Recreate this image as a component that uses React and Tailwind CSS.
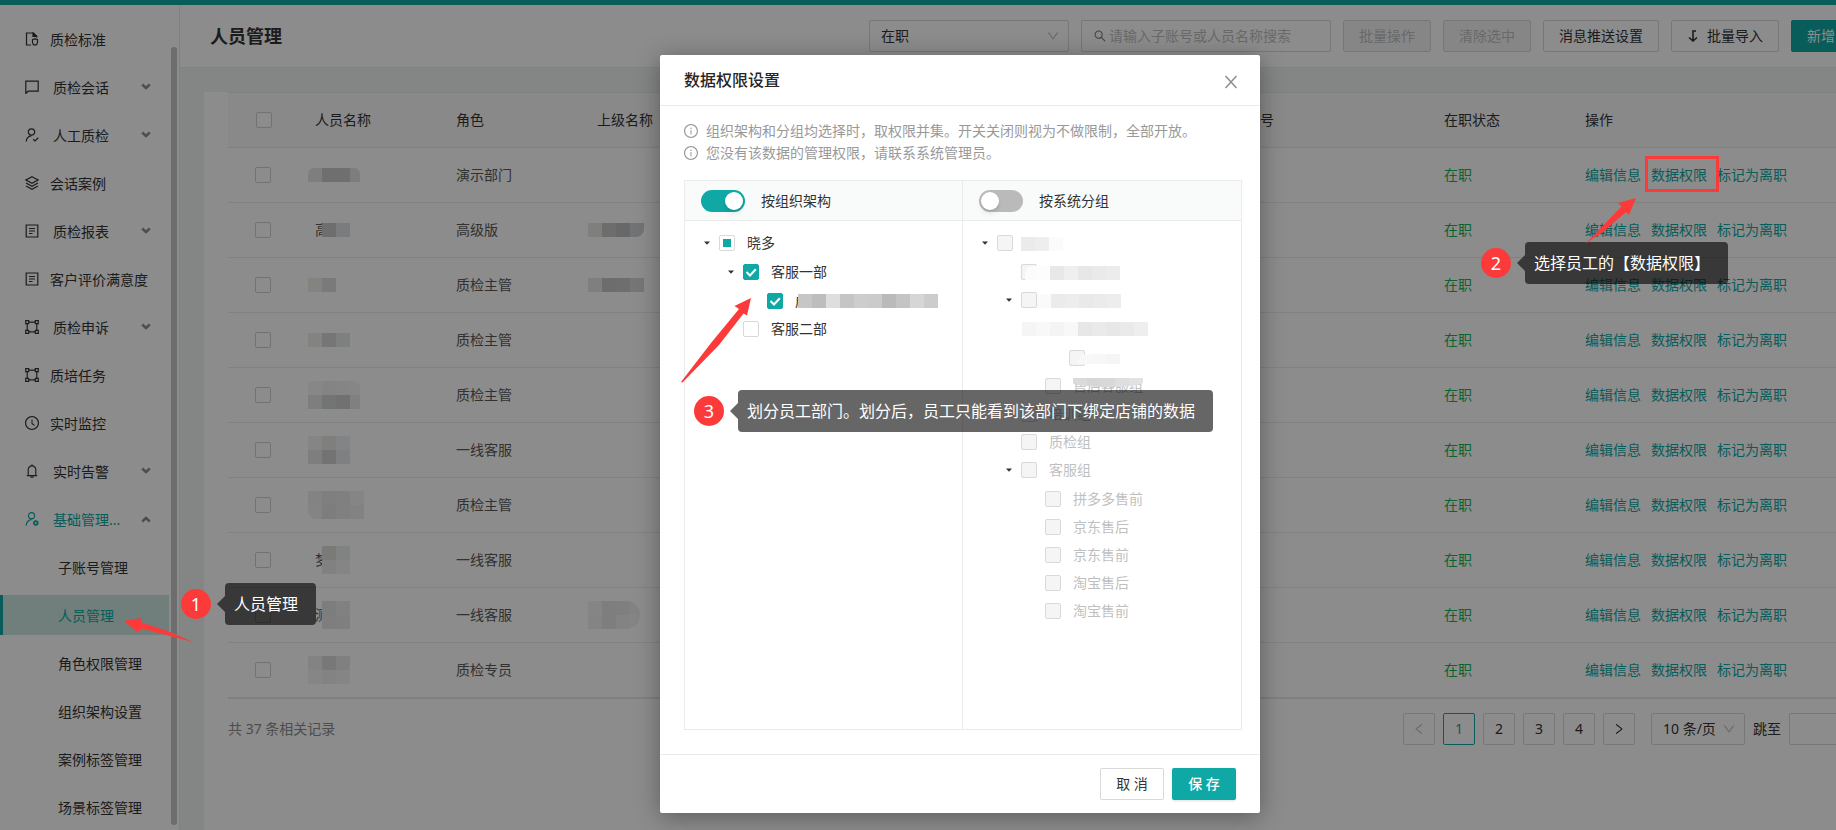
import React from 'react';
import {
  AiOutlineBell,
  AiOutlineClockCircle,
  AiOutlineDown,
  AiOutlineInfoCircle,
  AiOutlineLeft,
  AiOutlineRight,
  AiOutlineSearch
} from 'react-icons/ai';

// Sidebar icons, all on a 14px grid
const Icon = ({ children }) => (
  <svg className="h-3.5 w-3.5 shrink-0" viewBox="0 0 14 14" fill="none" stroke="currentColor" strokeWidth="1.2">
    {children}
  </svg>
);

const StandardIcon = () => (
  <Icon>
    <path d="M6 13H1.5V1H8.5L11.5 4V5.5" />
    <path d="M8 1V4.5H11.5Z" fill="currentColor" />
    <path d="M7.5 7.5L10 6.8L12.5 7.5V10.5C12.5 12 11.3 12.8 10 13.2C8.7 12.8 7.5 12 7.5 10.5Z" />
  </Icon>
);

const ChatIcon = () => (
  <Icon>
    <path d="M0.8 13.5V1.2H13.2V11.2H3.2Z" />
  </Icon>
);

const UserCheckIcon = () => (
  <Icon>
    <circle cx="6.5" cy="4" r="3.2" />
    <path d="M1.2 13.5C1.4 10.5 3.2 8.3 6.5 7.6M8.2 11.3L10 13L13.3 9.8" />
  </Icon>
);

const LayersIcon = () => (
  <Icon>
    <path d="M7 0.8L13 4L7 7.2L1 4Z" />
    <path d="M1 7L7 10.2L13 7M1 10L7 13.2L13 10" />
  </Icon>
);

const ReportIcon = () => (
  <Icon>
    <path d="M1.2 1H12.8V13H1.2Z" />
    <path d="M4 4.5H10M4 7H10M4 9.5H7.5" />
  </Icon>
);

const FrameIcon = () => (
  <Icon>
    <path d="M3.8 2.2H10.2M3.8 11.8H10.2M2.2 3.8V10.2M11.8 3.8V10.2" />
    <path d="M0.7 0.7H3.7V3.7H0.7ZM10.3 0.7H13.3V3.7H10.3ZM0.7 10.3H3.7V13.3H0.7ZM10.3 10.3H13.3V13.3H10.3Z" />
  </Icon>
);

const UserSettingIcon = () => (
  <Icon>
    <circle cx="6.5" cy="3.8" r="3.1" />
    <path d="M1.2 13.5C1.4 10.5 3 8.2 6.5 7.4" />
    <circle cx="10.8" cy="11" r="1.8" strokeWidth="1.8" />
  </Icon>
);

const menu = [
  { label: '质检标准', icon: <StandardIcon /> },
  { label: '质检会话', icon: <ChatIcon />, arrow: 'down' },
  { label: '人工质检', icon: <UserCheckIcon />, arrow: 'down' },
  { label: '会话案例', icon: <LayersIcon /> },
  { label: '质检报表', icon: <ReportIcon />, arrow: 'down' },
  { label: '客户评价满意度', icon: <ReportIcon /> },
  { label: '质检申诉', icon: <FrameIcon />, arrow: 'down' },
  { label: '质培任务', icon: <FrameIcon /> },
  { label: '实时监控', icon: <AiOutlineClockCircle className="-mx-px h-4 w-4" /> },
  { label: '实时告警', icon: <AiOutlineBell className="-mx-px h-4 w-4" />, arrow: 'down' },
  { label: '基础管理...', icon: <UserSettingIcon />, arrow: 'up', open: true }
];

const subMenu = ['子账号管理', '人员管理', '角色权限管理', '组织架构设置', '案例标签管理', '场景标签管理'];

const Sidebar = () => (
  <nav className="relative w-[180px] shrink-0 overflow-hidden border-r border-[#ececec] bg-white pt-[14px]">
    <ul className="mr-[10px] flex flex-col gap-2">
      {menu.map((item) => (
        <li key={item.label}>
          <a
            href="#"
            className={`flex h-10 items-center pl-[25px] ${item.arrow ? 'gap-[14px]' : 'gap-[11px]'} ${item.open ? 'text-[#10a8a4]' : 'text-[#333]'}`}
          >
            {item.icon}
            <span className="grow pt-0.5 whitespace-nowrap">{item.label}</span>
            {item.arrow && (
              <svg
                className={`mr-[18px] h-2.5 w-2.5 text-[#8c8c8c] ${item.arrow === 'up' ? 'rotate-180' : ''}`}
                viewBox="0 0 10 10"
                fill="none"
                stroke="currentColor"
                strokeWidth="2.4"
              >
                <path d="M1.2 2.5L5 6L8.8 2.5" />
              </svg>
            )}
          </a>
        </li>
      ))}
      {subMenu.map((label) => (
        <li key={label}>
          <a
            href="#"
            className={`flex h-10 items-center border-l-[3px] pt-0.5 pl-[55px] ${label === '人员管理' ? 'border-[#10a8a4] bg-[#cde7e2] text-[#10a8a4]' : 'border-transparent text-[#333]'}`}
          >
            {label}
          </a>
        </li>
      ))}
    </ul>
    <div className="absolute top-[42px] right-0.5 bottom-[5px] w-1.5 rounded-full bg-[#c6c6c6]"></div>
  </nav>
);

const Header = () => (
  <header className="flex h-[63px] items-center border-b border-[#ececec] bg-white pr-[41px] pl-[30px]">
    <h1 className="text-lg font-bold text-[#333]">人员管理</h1>
    <div className="ml-auto flex gap-3">
      <div className="relative">
        <select aria-label="在职状态" className="h-8 w-[200px] appearance-none rounded-xs border border-[#d9d9d9] bg-white px-[11px] text-[#333]">
          <option>在职</option>
        </select>
        <AiOutlineDown className="pointer-events-none absolute top-[9px] right-[9px] h-3.5 w-3.5 text-[#bfbfbf]" />
      </div>
      <label className="flex h-8 w-[250px] items-center gap-0.5 rounded-xs border border-[#d9d9d9] px-[11px]">
        <AiOutlineSearch className="h-3.5 w-3.5 text-[#777]" />
        <input
          type="text"
          aria-label="搜索"
          placeholder="请输入子账号或人员名称搜索"
          className="min-w-0 grow outline-none placeholder:text-[#bfbfbf]"
        />
      </label>
      <button disabled className="h-8 rounded-xs border border-[#d9d9d9] bg-[#f5f5f5] px-[15px] text-[#bfbfbf]">批量操作</button>
      <button disabled className="h-8 rounded-xs border border-[#d9d9d9] bg-[#f5f5f5] px-[15px] text-[#bfbfbf]">清除选中</button>
      <button className="h-8 rounded-xs border border-[#d9d9d9] px-[15px] text-[#333]">消息推送设置</button>
      <button className="flex h-8 items-center gap-2 rounded-xs border border-[#d9d9d9] px-[15px] text-[#333]">
        <svg className="h-3 w-3" viewBox="0 0 12 12" fill="none" stroke="currentColor" strokeWidth="1.6">
          <path d="M9 1H6V11M2 7.5L6 11L10 7.5" />
        </svg>
        批量导入
      </button>
      <button className="h-8 rounded-xs bg-[#10a8a4] px-4 text-white">新增人员</button>
    </div>
  </header>
);

// Masked text: rows of 14px blocks
const Mosaic = ({ rows, className = '' }) => (
  <div className={className}>
    {rows.map((cells, i) => (
      <div key={i} className="flex">
        {cells.map((color, j) => (
          <span key={j} className={`h-3.5 w-3.5 shrink-0 ${color}`}></span>
        ))}
      </div>
    ))}
  </div>
);

const people = [
  {
    role: '演示部门',
    mask: [['bg-[#e6e5e2]', 'bg-[#cacaca]', 'bg-[#cacaca]', 'bg-[#e2e4e8]']],
    shape: 'w-[52px] overflow-hidden rounded-t-md'
  },
  {
    first: '高',
    role: '高级版',
    mask: [['bg-[#c8c8c8]', 'bg-[#e0e2e6]']],
    leader: [['bg-[#e8e7e4]', 'bg-[#c6c6c6]', 'bg-[#bebebe]', 'bg-[#d0d2d6]']],
    leaderShape: 'w-14 overflow-hidden rounded-br-lg'
  },
  {
    role: '质检主管',
    mask: [['bg-[#eeeeea]', 'bg-[#dedede]']],
    leader: [['bg-[#e8e7e4]', 'bg-[#c6c6c6]', 'bg-[#c8c8c8]', 'bg-[#d8d8d8]']]
  },
  { role: '质检主管', mask: [['bg-[#efeeeb]', 'bg-[#d8d8d8]', 'bg-[#e6e8e7]']] },
  {
    role: '质检主管',
    mask: [
      ['bg-[#f6f6f6]', 'bg-[#f0f0f0]', 'bg-[#f2f2f2]', 'bg-[#f4f4f4]'],
      ['bg-[#e6e5e2]', 'bg-[#d2d5d4]', 'bg-[#cecece]', 'bg-[#eaeaea]']
    ],
    shape: 'w-[52px] overflow-hidden rounded-tr-md'
  },
  {
    role: '一线客服',
    mask: [
      ['bg-[#f2f2f2]', 'bg-[#e8e8e6]', 'bg-[#eef0f3]'],
      ['bg-[#e6e6e6]', 'bg-[#d2d2d2]', 'bg-[#e8eaed]']
    ]
  },
  {
    role: '质检主管',
    mask: [
      ['bg-[#eeeeee]', 'bg-[#e8e8e8]', 'bg-[#eaeaea]', 'bg-[#f0f2f1]'],
      ['bg-[#f0f0f0]', 'bg-[#e2e5e4]', 'bg-[#eaeaea]', 'bg-[#ecefee]']
    ],
    shape: 'overflow-hidden rounded-bl-lg'
  },
  {
    first: '梦',
    role: '一线客服',
    mask: [
      ['bg-[#deded9]', 'bg-[#ecefee]'],
      ['bg-[#ececec]', 'bg-[#f2f2f2]']
    ]
  },
  {
    first: '测',
    role: '一线客服',
    mask: [
      ['bg-[#e2e5e4]', 'bg-[#ececec]'],
      ['bg-[#e6e6e6]', 'bg-[#e8e8e8]']
    ],
    leader: [
      ['bg-[#f2f2f2]', 'bg-[#e6e6e6]', 'bg-[#e8e8e8]', 'bg-[#eeeeee]'],
      ['bg-[#f0f0f0]', 'bg-[#e4e7e6]', 'bg-[#eeeeee]', 'bg-[#f2f2f2]']
    ],
    leaderShape: 'w-[52px] overflow-hidden rounded-r-2xl'
  },
  {
    role: '质检专员',
    mask: [
      ['bg-[#eeeeee]', 'bg-[#dadada]', 'bg-[#eaeaea]'],
      ['bg-[#f4f4f4]', 'bg-[#eeeeee]', 'bg-[#f2f2f2]']
    ]
  }
];

const RowCheck = ({ label }) => (
  <input
    type="checkbox"
    aria-label={label}
    className="block h-4 w-4 appearance-none rounded-xs border border-[#d0d0d0] bg-white"
  />
);

const PeopleTable = () => (
  <table className="w-full table-fixed border-t border-[#ececec] text-left">
    <colgroup>
      <col className="w-[71px]" />
      <col className="w-[141px]" />
      <col className="w-[141px]" />
      <col />
      <col className="w-[198px]" />
      <col className="w-[141px]" />
      <col className="w-[303px]" />
    </colgroup>
    <thead className="bg-[#fafafa]">
      <tr className="h-[55px] border-b border-[#ececec] text-[#333] [&>th]:px-4 [&>th]:font-normal">
        <th><div className="pl-3"><RowCheck label="全选" /></div></th>
        <th>人员名称</th>
        <th>角色</th>
        <th>上级名称</th>
        <th>账号</th>
        <th>在职状态</th>
        <th>操作</th>
      </tr>
    </thead>
    <tbody className="border-b-2 border-[#e8e8e8]">
      {people.map((person, i) => (
        <tr key={i} className="h-[55px] border-b border-[#ececec] text-[#595959] [&>td]:px-4">
          <td><div className="pl-[11px]"><RowCheck label={`选择第 ${i + 1} 行`} /></div></td>
          <td>
            <div className="flex items-center">
              {person.first}
              <Mosaic rows={person.mask} className={`relative -ml-[7px] ${person.shape || ''}`} />
            </div>
          </td>
          <td>{person.role}</td>
          <td>{person.leader && <Mosaic rows={person.leader} className={`-ml-[9px] ${person.leaderShape || ''}`} />}</td>
          <td></td>
          <td className="text-[#16b558]">在职</td>
          <td>
            <div className="flex gap-[10px] text-[#10a8a4]">
              <a href="#">编辑信息</a>
              <a href="#">数据权限</a>
              <a href="#">标记为离职</a>
            </div>
          </td>
        </tr>
      ))}
    </tbody>
  </table>
);

const Pagination = () => (
  <div className="mt-[14px] flex items-center text-[#333]">
    <span className="text-[#8c8c8c]">共 37 条相关记录</span>
    <div className="ml-auto flex items-center gap-2">
      <button disabled aria-label="上一页" className="flex h-8 w-8 items-center justify-center rounded-xs border border-[#d9d9d9] text-[#bfbfbf]">
        <AiOutlineLeft className="h-3.5 w-3.5" />
      </button>
      {[1, 2, 3, 4].map((page) => (
        <button
          key={page}
          className={`h-8 w-8 rounded-xs border ${page === 1 ? 'border-[#10a8a4] text-[#10a8a4]' : 'border-[#d9d9d9]'}`}
        >
          {page}
        </button>
      ))}
      <button aria-label="下一页" className="flex h-8 w-8 items-center justify-center rounded-xs border border-[#d9d9d9]">
        <AiOutlineRight className="h-3.5 w-3.5" />
      </button>
      <div className="relative ml-2">
        <select aria-label="每页条数" className="h-8 w-[94px] appearance-none rounded-xs border border-[#d9d9d9] bg-white px-[11px]">
          <option>10 条/页</option>
        </select>
        <AiOutlineDown className="pointer-events-none absolute top-[9px] right-[9px] h-3.5 w-3.5 text-[#bfbfbf]" />
      </div>
      <label htmlFor="jump">跳至</label>
      <input id="jump" type="text" className="h-8 w-[61px] rounded-xs border border-[#d9d9d9] px-2" />
      <span>页</span>
    </div>
  </div>
);

// Tree data for the two permission panels
const orgTree = [
  {
    label: '晓多',
    state: 'half',
    children: [
      {
        label: '客服一部',
        state: 'checked',
        children: [
          {
            label: '成',
            state: 'checked',
            mask: [['bg-[#c6c6c6]', 'bg-[#bdbdbd]', 'bg-[#dedede]', 'bg-[#c5c5c5]', 'bg-[#cdcdcd]', 'bg-[#cbcbcb]', 'bg-[#bababa]', 'bg-[#c4c4c4]', 'bg-[#d6d6d6]', 'bg-[#cccccc]']],
            maskClass: 'left-[3px] top-[7px]'
          }
        ]
      },
      { label: '客服二部' }
    ]
  }
];

const groupTree = [
  {
    label: '',
    state: 'disabled',
    mask: [['bg-[#ebebeb]', 'bg-[#eeeeee]', 'bg-[#fbfbfb]']],
    maskClass: '-left-[4px] top-[8px]',
    children: [
      {
        label: '',
        state: 'disabled',
        mask: [['bg-[#fafafa]', 'bg-[#fcfcfc]', 'bg-[#fdfdfd]', 'bg-[#e8e8e8]', 'bg-[#efefef]', 'bg-[#e7e7e7]', 'bg-[#eaeaea]', 'bg-[#ececec]']],
        maskClass: 'right-[-71px] top-[8px] w-[95px] overflow-hidden rounded-tl-lg flex justify-end'
      },
      {
        label: '',
        state: 'disabled',
        mask: [['bg-[#fafafa]', 'bg-[#ebebeb]', 'bg-[#ededed]', 'bg-[#e9e9e9]', 'bg-[#ebebeb]', 'bg-[#ededed]']],
        maskClass: '-left-[12px] top-[8px]',
        children: [
          {
            label: '',
            mask: [['bg-[#f5f5f5]', 'bg-[#f8f8f8]', 'bg-[#f4f4f4]', 'bg-[#f8f8f8]', 'bg-[#e7e7e7]', 'bg-[#eaeaea]', 'bg-[#e7e7e7]', 'bg-[#eaeaea]', 'bg-[#eeeeee]']],
            state: 'hidden',
            maskClass: '-left-[51px] top-[7px]',
            children: [
              {
                label: '',
                state: 'disabled',
                mask: [['bg-[#f8f8f8]', 'bg-[#f7f7f7]', 'bg-[#f5f5f5]']],
                maskClass: '-left-[19px] top-[10px] h-[10px] rounded-tl-lg overflow-hidden'
              }
            ]
          },
          {
            label: '售后客服组',
            state: 'disabled',
            mask: [['bg-[#dadada]', 'bg-[#d6d6d6]', 'bg-[#d8d8d8]', 'bg-[#dedede]', 'bg-[#e2e2e2]']],
            maskClass: 'left-0 top-[6px] h-[9px] overflow-hidden rounded-b-[50%]'
          }
        ]
      },
      { label: '培训组', state: 'disabled' },
      { label: '质检组', state: 'disabled' },
      {
        label: '客服组',
        state: 'disabled',
        children: [
          { label: '拼多多售前', state: 'disabled' },
          { label: '京东售后', state: 'disabled' },
          { label: '京东售前', state: 'disabled' },
          { label: '淘宝售后', state: 'disabled' },
          { label: '淘宝售前', state: 'disabled' }
        ]
      }
    ]
  }
];

const TreeCheck = ({ state }) => {
  const look = {
    checked: 'border-[#10a8a4] bg-[#10a8a4]',
    disabled: 'border-[#d9d9d9] bg-[#f5f5f5]',
    hidden: 'invisible'
  };

  return (
    <span className="relative h-4 w-4 shrink-0">
      <input
        type="checkbox"
        defaultChecked={state === 'checked'}
        disabled={state === 'disabled'}
        className={`block h-4 w-4 appearance-none rounded-xs border ${look[state] || 'border-[#d9d9d9] bg-white'}`}
      />
      {state === 'checked' && (
        <svg className="pointer-events-none absolute inset-0 h-4 w-4" viewBox="0 0 16 16" fill="none" stroke="#fff" strokeWidth="2">
          <path d="M3.5 8L7 11.5L12.8 5.2" />
        </svg>
      )}
      {state === 'half' && <span className="pointer-events-none absolute inset-1 bg-[#10a8a4]"></span>}
    </span>
  );
};

const Tree = ({ nodes, nested }) => (
  <ul className={nested ? 'pt-px pl-6' : ''}>
    {nodes.map((node, i) => (
      <li key={i}>
        <div className="flex h-7 items-center">
          <span className="flex w-6 shrink-0 justify-center">
            {node.children && node.state !== 'hidden' && (
              <svg className="h-1 w-1.5" viewBox="0 0 6 4" fill="#333">
                <path d="M0 0.5H6L3 3.8Z" />
              </svg>
            )}
          </span>
          <label className={`flex h-7 items-center gap-3 ${node.state === 'disabled' ? 'text-[#bfbfbf]' : 'text-[#333]'}`}>
            <TreeCheck state={node.state} />
            <span className="relative h-7 leading-7 whitespace-nowrap">
              {node.label}
              {node.mask && <Mosaic rows={node.mask} className={`absolute ${node.maskClass}`} />}
            </span>
          </label>
        </div>
        {node.children && <Tree nodes={node.children} nested />}
      </li>
    ))}
  </ul>
);

const Panel = ({ title, nodes, on }) => (
  <section className="first:border-r first:border-[#ebebeb]">
    <label className="flex h-10 items-center gap-4 border-b border-[#ebebeb] bg-[#f9fbfa] pl-4 text-[#333]">
      <input
        type="checkbox"
        role="switch"
        defaultChecked={on}
        className="h-[22px] w-11 appearance-none rounded-full bg-[#bababa] p-0.5 before:block before:h-[18px] before:w-[18px] before:rounded-full before:bg-white before:shadow-md checked:bg-[#10a8a4] checked:before:ml-auto"
      />
      {title}
    </label>
    <div className="min-h-[508px] pt-2 pl-[10px]">
      <Tree nodes={nodes} />
    </div>
  </section>
);

const PermissionDialog = () => (
  <div
    role="dialog"
    aria-label="数据权限设置"
    className="w-[600px] rounded-xs bg-white shadow-[0_4px_24px_rgba(0,0,0,0.35)]"
  >
    <div className="flex h-[51px] items-center justify-between border-b border-[#ebebeb] pr-[21px] pl-6">
      <h2 className="text-base font-medium text-[#262626]">数据权限设置</h2>
      <button aria-label="关闭" className="pt-1 text-[#8c8c8c]">
        <svg className="h-4 w-4" viewBox="0 0 16 16" fill="none" stroke="currentColor" strokeWidth="1.5">
          <path d="M2.5 2L13.5 14M13.5 2L2.5 14" />
        </svg>
      </button>
    </div>
    <div className="pt-[14px] pr-[18px] pb-6 pl-6">
      <p className="flex items-center gap-[7px] leading-[22px] text-[#999]">
        <AiOutlineInfoCircle className="-ml-px h-4 w-4" />
        组织架构和分组均选择时，取权限并集。开关关闭则视为不做限制，全部开放。
      </p>
      <p className="flex items-center gap-[7px] leading-[22px] text-[#999]">
        <AiOutlineInfoCircle className="-ml-px h-4 w-4" />
        您没有该数据的管理权限，请联系系统管理员。
      </p>
      <div className="mt-4 grid grid-cols-2 border border-[#ebebeb]">
        <Panel title="按组织架构" nodes={orgTree} on />
        <Panel title="按系统分组" nodes={groupTree} />
      </div>
    </div>
    <div className="flex h-[59px] items-center justify-end gap-2 border-t border-[#ebebeb] pr-6">
      <button className="h-8 w-16 rounded-xs border border-[#d9d9d9] text-[#333]">取 消</button>
      <button className="h-8 w-16 rounded-xs bg-[#10a8a4] font-medium text-white shadow-sm">保 存</button>
    </div>
  </div>
);

// Numbered tip with a dark bubble
const Step = ({ number, text, className }) => (
  <div className={`absolute flex items-center text-base text-white ${className}`}>
    <span className="flex h-[30px] w-[30px] items-center justify-center rounded-full bg-[#fc3a39] text-lg">{number}</span>
    <svg className="ml-1.5 h-4 w-2" viewBox="0 0 8 16" fill="rgba(0,0,0,0.6)">
      <path d="M8 0V16L0 8Z" />
    </svg>
    <span className="h-[42px] rounded-sm bg-black/60 pr-[18px] pl-[9px] leading-[42px] whitespace-nowrap">{text}</span>
  </div>
);

const Guide = () => (
  <div className="pointer-events-none absolute inset-0 overflow-hidden">
    <div className="absolute top-[156px] left-[1645px] h-9 w-[74px] border-[3px] border-[#fc3a39]"></div>
    <Step number={1} text="人员管理" className="top-[583px] left-[181px]" />
    <Step number={2} text="选择员工的【数据权限】" className="top-[242px] left-[1481px]" />
    <Step number={3} text="划分员工部门。划分后，员工只能看到该部门下绑定店铺的数据" className="top-[390px] left-[694px]" />
    <svg className="absolute top-[617px] left-[124px] h-[26px] w-[70px]" viewBox="0 0 70 26" fill="#fc3a39">
      <path d="M0 4L18 1L17.5 5.5L45 14.5L69 25L44 18.5L18 11.5L14 15.7Z" />
    </svg>
    <svg className="absolute top-[198px] left-[1585px] h-[46px] w-[52px]" viewBox="0 0 52 46" fill="#fc3a39">
      <path d="M51 0L33 5L36.5 8.5L12 34L0 46L18 34L41 14L44 17Z" />
    </svg>
    <svg className="absolute top-[298px] left-[681px] h-[85px] w-[71px]" viewBox="0 0 71 85" fill="#fc3a39">
      <path d="M70 0L53.5 8L58 11L30 45L0 84L1.5 84.5L38 47L62.5 15.5L66 17.5Z" />
    </svg>
  </div>
);

const App = () => {
  return (
    <div className="h-screen min-h-[830px] w-full overflow-hidden">
      <div className="relative flex h-full min-w-[1920px] flex-col bg-[#f0f5f3] font-['Noto_Sans','Noto_Sans_CJK_SC',sans-serif] text-sm">
        <div className="h-[5px] shrink-0 bg-[#10a8a4]"></div>
        <div className="flex min-h-0 grow">
          <Sidebar />
          <div className="flex min-w-0 grow flex-col">
            <Header />
            <main className="mx-6 mt-6 grow bg-white px-6">
              <PeopleTable />
              <Pagination />
            </main>
          </div>
        </div>
        <div className="absolute inset-0 flex items-start justify-center bg-black/45 pt-[55px]">
          <PermissionDialog />
        </div>
        <Guide />
      </div>
    </div>
  );
};

export default App;
